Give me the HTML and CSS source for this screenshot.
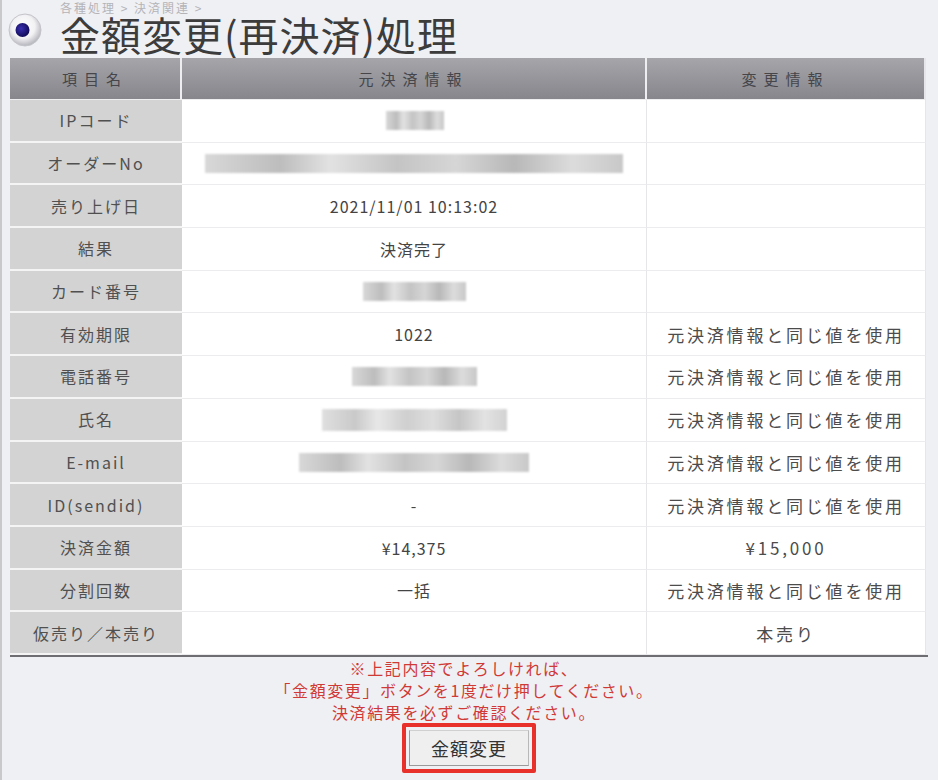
FILE: index.html
```html
<!DOCTYPE html>
<html lang="ja">
<head>
<meta charset="utf-8">
<title>金額変更(再決済)処理</title>
<link rel="stylesheet" href="styles.css">
</head>
<body>
<div class="page">
  <div class="head">
    <svg class="icon" width="34" height="34" viewBox="0 0 34 34">
      <defs>
        <radialGradient id="g1" cx="45%" cy="40%" r="60%">
          <stop offset="0" stop-color="#ffffff"/>
          <stop offset="0.6" stop-color="#f2f2f4"/>
          <stop offset="1" stop-color="#b4b4bc"/>
        </radialGradient>
        <radialGradient id="g2" cx="40%" cy="40%" r="60%">
          <stop offset="0" stop-color="#3a2fb0"/>
          <stop offset="1" stop-color="#120c5a"/>
        </radialGradient>
      </defs>
      <circle cx="17" cy="17" r="16" fill="url(#g1)" stroke="#c4c4ca" stroke-width="1"/>
      <circle cx="14.5" cy="17" r="7" fill="url(#g2)"/>
    </svg>
    <div class="titles">
      <div class="crumb">各種処理 &gt; 決済関連 &gt;</div>
      <h1 class="title">金額変更(再決済)処理</h1>
    </div>
  </div>

  <div class="grid">
    <div class="th">項目名</div>
    <div class="th">元決済情報</div>
    <div class="th last">変更情報</div>

    <div class="lbl">IPコード</div>
    <div class="val"><span class="blur b-ip"></span></div>
    <div class="chg"></div>

    <div class="lbl">オーダーNo</div>
    <div class="val"><span class="blur b-order"></span></div>
    <div class="chg"></div>

    <div class="lbl">売り上げ日</div>
    <div class="val">2021/11/01 10:13:02</div>
    <div class="chg"></div>

    <div class="lbl">結果</div>
    <div class="val">決済完了</div>
    <div class="chg"></div>

    <div class="lbl">カード番号</div>
    <div class="val"><span class="blur b-card"></span></div>
    <div class="chg"></div>

    <div class="lbl">有効期限</div>
    <div class="val">1022</div>
    <div class="chg">元決済情報と同じ値を使用</div>

    <div class="lbl">電話番号</div>
    <div class="val"><span class="blur b-tel"></span></div>
    <div class="chg">元決済情報と同じ値を使用</div>

    <div class="lbl">氏名</div>
    <div class="val"><span class="blur b-name"></span></div>
    <div class="chg">元決済情報と同じ値を使用</div>

    <div class="lbl">E-mail</div>
    <div class="val"><span class="blur b-mail"></span></div>
    <div class="chg">元決済情報と同じ値を使用</div>

    <div class="lbl">ID(sendid)</div>
    <div class="val">-</div>
    <div class="chg">元決済情報と同じ値を使用</div>

    <div class="lbl">決済金額</div>
    <div class="val">¥14,375</div>
    <div class="chg">¥15,000</div>

    <div class="lbl">分割回数</div>
    <div class="val">一括</div>
    <div class="chg">元決済情報と同じ値を使用</div>

    <div class="lbl">仮売り／本売り</div>
    <div class="val"></div>
    <div class="chg">本売り</div>
  </div>

  <div class="notice">
    <div>※上記内容でよろしければ、</div>
    <div>「金額変更」ボタンを1度だけ押してください。</div>
    <div>決済結果を必ずご確認ください。</div>
  </div>

  <div class="actions">
    <span class="mark"><button class="btn" type="button">金額変更</button></span>
  </div>
</div>
</body>
</html>
```
FILE: styles.css
```css
html, body {
  margin: 0;
  padding: 0;
  background: #eff0f4;
}
body {
  font-family: "Noto Sans CJK JP", "Noto Sans", sans-serif;
  color: #444;
  width: 938px;
  height: 780px;
  overflow: hidden;
  border-left: 2px solid #c9c9cc;
  box-sizing: border-box;
}
.page {
  padding: 0 10px 0 8px;
}
.head {
  display: flex;
  height: 58px;
}
.icon {
  margin-top: 13px;
  margin-left: -2px;
  flex: none;
}
.titles {
  margin-left: 18px;
}
.crumb {
  font-size: 12px;
  line-height: 13px;
  padding-top: 1px;
  color: #b4b4b8;
  letter-spacing: 2px;
}
.title {
  margin: 0;
  font-size: 40px;
  line-height: 40px;
  font-weight: 400;
  color: #3c3c3c;
  letter-spacing: 1px;
}
.grid {
  display: grid;
  grid-template-columns: 172px 465px 279px;
  grid-template-rows: 42px repeat(13, 42.7px);
  border-bottom: 2px solid #6e6e72;
  width: 918px;
}
.th {
  background: linear-gradient(#a5a5aa, #86868c);
  color: #45454a;
  font-size: 15px;
  letter-spacing: 7px;
  display: flex;
  align-items: center;
  justify-content: center;
  border-right: 2px solid #eeeef0;
  border-bottom: 1px solid #eeeef0;
}
.th.last {
  border-right: 2px solid #e6e6ea;
}
.lbl {
  background: #d3d3d3;
  color: #505050;
  font-size: 16px;
  letter-spacing: 2px;
  display: flex;
  align-items: center;
  justify-content: center;
  border-bottom: 2px solid #f4f4f4;
  box-sizing: border-box;
}
.val, .chg {
  background: #ffffff;
  display: flex;
  align-items: center;
  justify-content: center;
  border-bottom: 1px solid #ececee;
  border-right: 1px solid #e6e6e8;
  box-sizing: border-box;
  color: #444;
}
.val {
  font-size: 16px;
  letter-spacing: 1px;
}
.chg {
  font-size: 17px;
  letter-spacing: 2.8px;
  color: #4c4c4c;
}
.blur {
  display: inline-block;
  height: 19px;
  filter: blur(1.2px);
  background: linear-gradient(90deg, #d8d8d8 0%, #bdbdbd 18%, #e2e2e2 30%, #c4c4c4 46%, #d6d6d6 60%, #b8b8b8 74%, #dcdcdc 88%, #c8c8c8 100%);
}
.b-ip { width: 58px; margin-left: 1px; }
.b-order { width: 418px; }
.b-card { width: 103px; }
.b-tel { width: 125px; }
.b-name { width: 185px; height: 22px; opacity: 0.8; }
.b-mail { width: 230px; }
.notice {
  text-align: center;
  color: #d03a36;
  font-size: 16px;
  line-height: 22px;
  letter-spacing: 1.6px;
  margin-left: -10px;
}
.actions {
  display: flex;
  justify-content: center;
}
.mark {
  display: inline-block;
  border: 4px solid #e8312a;
  border-radius: 2px;
  padding: 3px;
  background: #eff0f4;
}
.btn {
  display: block;
  width: 120px;
  height: 36px;
  background: #efefef;
  border: 1px solid #9a9a9a;
  border-top-color: #d0d0d0;
  border-right-color: #b8b8b8;
  font-family: "Noto Sans CJK JP", sans-serif;
  font-size: 18px;
  color: #333;
  letter-spacing: 1px;
  padding: 0;
}
```
